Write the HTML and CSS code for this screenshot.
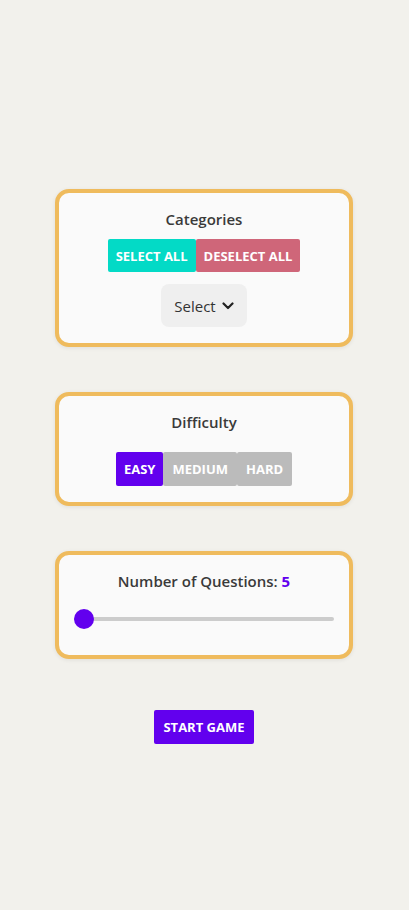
FILE: index.html
```html
<!DOCTYPE html>
<html lang="en">
<head>
<meta charset="utf-8">
<title>Quiz Setup</title>
<link rel="stylesheet" href="styles.css">
</head>
<body>
<main class="setup">
  <section class="card card-categories">
    <h2 class="card-title">Categories</h2>
    <div class="btn-group">
      <button class="btn btn-teal">SELECT ALL</button>
      <button class="btn btn-red">DESELECT ALL</button>
    </div>
    <button class="select-btn">Select
      <svg class="chevron" viewBox="0 0 12 8" width="12" height="8"><path d="M1.5 1.5 L6 6 L10.5 1.5" fill="none" stroke="#222" stroke-width="2.2" stroke-linecap="round" stroke-linejoin="round"/></svg>
    </button>
  </section>
  <section class="card card-difficulty">
    <h2 class="card-title">Difficulty</h2>
    <div class="btn-group btn-group-diff">
      <button class="btn btn-purple">EASY</button>
      <button class="btn btn-gray">MEDIUM</button>
      <button class="btn btn-gray">HARD</button>
    </div>
  </section>
  <section class="card card-questions">
    <h2 class="card-title">Number of Questions: <span class="count">5</span></h2>
    <input class="slider" type="range" min="5" max="50" value="5">
  </section>
  <button class="btn btn-purple btn-start">START GAME</button>
</main>
</body>
</html>
```
FILE: styles.css
```css
* { box-sizing: border-box; }
html, body { margin: 0; padding: 0; }
body {
  background: #f2f1ec;
  font-family: "Open Sans", "Noto Sans", sans-serif;
  color: #333;
  min-height: 910px;
}
.setup {
  display: flex;
  flex-direction: column;
  align-items: center;
  padding-top: 189px;
  padding-right: 1px;
  gap: 45px;
}
.card {
  width: 298px;
  background: #fafafa;
  border: 4px solid #efbb5d;
  border-radius: 14px;
  box-shadow: 0 1px 4px rgba(0, 0, 0, 0.08);
  display: flex;
  flex-direction: column;
  align-items: center;
  padding: 16px 15px 16px;
}
.card-title {
  margin: 0;
  font-size: 15px;
  font-weight: 600;
  line-height: 20px;
  color: #3a3a3a;
}
.btn-group {
  display: flex;
  margin-top: 10px;
}
.btn-group-diff { margin-top: 20px; }
.btn {
  border: none;
  font-family: inherit;
  font-size: 13px;
  font-weight: 700;
  color: #fff;
  height: 33px;
  padding: 0 8px;
  border-radius: 2px;
  cursor: pointer;
}
.btn-teal { background: #03dac6; }
.btn-red { background: #cf6679; }
.btn-purple { background: #6200ee; }
.btn-gray { background: #bbbbbb; }
.btn-group-diff .btn { height: 34px; }
.btn-group-diff .btn-gray { padding: 0 9px; }
.select-btn {
  margin-top: 12px;
  width: 86px;
  height: 43px;
  border: none;
  border-radius: 8px;
  background: #efefef;
  font-family: inherit;
  font-size: 15px;
  color: #333;
  display: flex;
  align-items: center;
  justify-content: center;
  gap: 6px;
}
.chevron { display: block; }
.count { color: #6200ee; font-weight: 700; }
.card-questions { padding-bottom: 26px; }
.slider {
  -webkit-appearance: none;
  appearance: none;
  width: 100%;
  margin: 18px 0 0;
  height: 20px;
  background: transparent;
}
.slider::-webkit-slider-runnable-track {
  height: 4px;
  background: #cccccc;
  border-radius: 2px;
}
.slider::-webkit-slider-thumb {
  -webkit-appearance: none;
  width: 20px;
  height: 20px;
  border-radius: 50%;
  background: #6200ee;
  border: none;
  margin-top: -8px;
}
.btn-start {
  margin-top: 6px;
  height: 34px;
  width: 100px;
  padding: 0;
}
```
